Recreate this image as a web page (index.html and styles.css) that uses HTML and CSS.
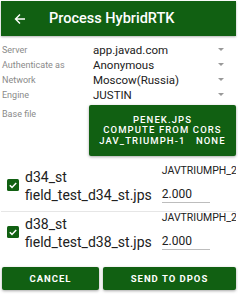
FILE: index.html
```html
<!DOCTYPE html>
<html>
<head>
<meta charset="utf-8">
<link rel="stylesheet" href="styles.css">
</head>
<body>
<div class="screen">
  <header class="bar">
    <svg class="back" width="12" height="12" viewBox="0 0 12 12"><path d="M11 6H2M6 1.5L1.5 6 6 10.5" fill="none" stroke="#fff" stroke-width="1.4"/></svg>
    <span class="title">Process HybridRTK</span>
  </header>
  <div class="form">
    <div class="row"><span class="label">Server</span><span class="value">app.javad.com</span><span class="caret"></span></div>
    <div class="row"><span class="label">Authenticate as</span><span class="value">Anonymous</span><span class="caret"></span></div>
    <div class="row"><span class="label">Network</span><span class="value">Moscow(Russia)</span><span class="caret"></span></div>
    <div class="row"><span class="label">Engine</span><span class="value">JUSTIN</span><span class="caret"></span></div>
    <div class="base">
      <span class="label">Base file</span>
      <div class="basebtn">
        <div>PENEK.JPS</div>
        <div>COMPUTE FROM CORS</div>
        <div>JAV_TRIUMPH-1&nbsp;&nbsp;&nbsp;NONE</div>
      </div>
    </div>
  </div>
  <div class="files">
    <div class="file">
      <span class="check"><svg width="12" height="12" viewBox="0 0 12 12"><rect width="12" height="12" rx="1.5" fill="#116012"/><path d="M2.8 6.2l2.2 2.2 4.2-4.4" fill="none" stroke="#fff" stroke-width="1.5"/></svg></span>
      <div class="names"><div>d34_st</div><div>field_test_d34_st.jps</div></div>
      <div class="side"><div class="recv">JAVTRIUMPH_2</div><div class="height">2.000</div></div>
    </div>
    <div class="sep"></div>
    <div class="file">
      <span class="check"><svg width="12" height="12" viewBox="0 0 12 12"><rect width="12" height="12" rx="1.5" fill="#116012"/><path d="M2.8 6.2l2.2 2.2 4.2-4.4" fill="none" stroke="#fff" stroke-width="1.5"/></svg></span>
      <div class="names"><div>d38_st</div><div>field_test_d38_st.jps</div></div>
      <div class="side"><div class="recv">JAVTRIUMPH_2</div><div class="height">2.000</div></div>
    </div>
  </div>
  <div class="actions">
    <button class="btn cancel">CANCEL</button>
    <button class="btn send">SEND TO DPOS</button>
  </div>
</div>
</body>
</html>
```
FILE: styles.css
```css
html, body { margin: 0; padding: 0; }
body { background: #fff; font-family: Roboto, "Noto Sans", sans-serif; width: 238px; height: 296px; overflow: hidden; }
.screen { padding: 1px 2px 0 1px; }
.bar { height: 35px; background: #116012; display: flex; align-items: center; box-shadow: 0 1px 2px rgba(0,0,0,0.3); }
.back { margin-left: 13px; }
.title { margin-left: 23px; color: #fff; font-weight: 500; font-size: 14.5px; }
.form { padding: 6px 0 0 1px; }
.row { display: flex; align-items: center; height: 15px; }
.label { width: 91px; font-size: 9px; color: #8a8a8a; flex: none; }
.value { font-size: 11.5px; color: #212121; flex: 1; }
.caret { width: 0; height: 0; border-left: 3px solid transparent; border-right: 3px solid transparent; border-top: 3px solid #999; margin-right: 12px; }
.base { display: flex; align-items: flex-start; margin-top: 3px; }
.base .label { width: 87px; margin-top: 4px; }
.basebtn { flex: 1; height: 51px; background: #116012; border-radius: 2px; box-shadow: 0 1px 3px rgba(0,0,0,0.35); color: #fff; font-size: 9.5px; font-weight: 500; letter-spacing: 1.1px; text-align: center; display: flex; flex-direction: column; justify-content: center; line-height: 10.5px; }
.files { margin-top: 9px; overflow: hidden; }
.file { display: flex; align-items: flex-start; height: 40px; }
.check { width: 12px; height: 12px; margin-left: 6px; margin-top: 14px; display: flex; flex: none; }
.names { margin-left: 6px; font-size: 14px; color: #212121; line-height: 18px; margin-top: 3px; flex: none; }
.side { margin-left: 10px; display: flex; flex-direction: column; flex: none; }
.recv { font-size: 10.5px; line-height: 12px; color: #212121; white-space: nowrap; }
.height { font-size: 12px; line-height: 14px; color: #212121; margin-top: 10px; width: 48px; border-bottom: 1px solid #bdbdbd; padding-bottom: 1px; }
.sep { height: 1px; background: #e6e6e6; margin-top: 6px; }
.actions { display: flex; gap: 4px; margin-top: 15px; padding-left: 1px; }
.btn { height: 23px; border: none; border-radius: 2px; background: #116012; color: #fff; font-family: Roboto, sans-serif; font-size: 9.5px; font-weight: 700; letter-spacing: 1px; box-shadow: 0 1px 3px rgba(0,0,0,0.35); padding: 0; }
.cancel { width: 97px; }
.send { flex: 1; }
```
